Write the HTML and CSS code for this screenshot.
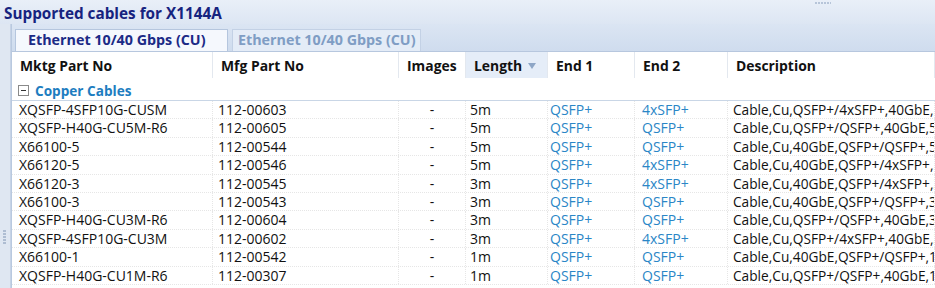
FILE: index.html
```html
<!DOCTYPE html>
<html lang="en">
<head>
    <meta charset="UTF-8">
    <title>Supported cables for X1144A</title>
    <link rel="stylesheet" href="styles.css">
</head>
<body>
    <div class="titlebar">
        <span class="title">Supported cables for X1144A</span>
        <span class="grip-h"></span>
    </div>
    <div class="main">
        <div class="side"><span class="grip-v"></span></div>
        <div class="panel">
            <div class="tabs">
                <div class="tab active">Ethernet 10/40 Gbps (CU)</div>
                <div class="tab">Ethernet 10/40 Gbps (CU)</div>
            </div>
            <div class="grid">
                <div class="row head">
                    <div class="cell">Mktg Part No</div>
                    <div class="cell">Mfg Part No</div>
                    <div class="cell">Images</div>
                    <div class="cell sorted">Length <span class="sort"></span></div>
                    <div class="cell">End 1</div>
                    <div class="cell">End 2</div>
                    <div class="cell">Description</div>
                </div>
                <div class="group"><span class="toggle"></span>Copper Cables</div>
                <div id="rows"></div>
            </div>
        </div>
    </div>

    <script>
        const cables = [
            ['XQSFP-4SFP10G-CUSM', '112-00603', '5m', 'QSFP+', '4xSFP+', 'Cable,Cu,QSFP+/4xSFP+,40GbE,5m'],
            ['XQSFP-H40G-CU5M-R6', '112-00605', '5m', 'QSFP+', 'QSFP+', 'Cable,Cu,QSFP+/QSFP+,40GbE,5m'],
            ['X66100-5', '112-00544', '5m', 'QSFP+', 'QSFP+', 'Cable,Cu,40GbE,QSFP+/QSFP+,5m'],
            ['X66120-5', '112-00546', '5m', 'QSFP+', '4xSFP+', 'Cable,Cu,40GbE,QSFP+/4xSFP+,5m'],
            ['X66120-3', '112-00545', '3m', 'QSFP+', '4xSFP+', 'Cable,Cu,40GbE,QSFP+/4xSFP+,3m'],
            ['X66100-3', '112-00543', '3m', 'QSFP+', 'QSFP+', 'Cable,Cu,40GbE,QSFP+/QSFP+,3m'],
            ['XQSFP-H40G-CU3M-R6', '112-00604', '3m', 'QSFP+', 'QSFP+', 'Cable,Cu,QSFP+/QSFP+,40GbE,3m'],
            ['XQSFP-4SFP10G-CU3M', '112-00602', '3m', 'QSFP+', '4xSFP+', 'Cable,Cu,QSFP+/4xSFP+,40GbE,3m'],
            ['X66100-1', '112-00542', '1m', 'QSFP+', 'QSFP+', 'Cable,Cu,40GbE,QSFP+/QSFP+,1m'],
            ['XQSFP-H40G-CU1M-R6', '112-00307', '1m', 'QSFP+', 'QSFP+', 'Cable,Cu,QSFP+/QSFP+,40GbE,1m']
        ];

        const rows = document.getElementById('rows');
        cables.forEach(c => {
            const row = document.createElement('div');
            row.className = 'row data';
            row.innerHTML =
                `<div class="cell">${c[0]}</div>` +
                `<div class="cell">${c[1]}</div>` +
                `<div class="cell center">-</div>` +
                `<div class="cell">${c[2]}</div>` +
                `<div class="cell link">${c[3]}</div>` +
                `<div class="cell link">${c[4]}</div>` +
                `<div class="cell desc">${c[5]}</div>`;
            rows.appendChild(row);
        });
    </script>
</body>
</html>
```

FILE: styles.css
```css
body {
    margin: 0;
    width: 935px;
    height: 288px;
    overflow: hidden;
    background: #dbe4f1;
    font-family: "Open Sans", "Noto Sans", sans-serif;
    font-size: 14px;
    color: #111;
}

.titlebar {
    height: 24px;
    display: flex;
    align-items: center;
    padding: 1px 0 0 4px;
    box-sizing: border-box;
    background: linear-gradient(#e9eff8, #dde6f3);
    position: relative;
}

.title {
    font-weight: bold;
    color: #16237f;
    font-size: 15.3px;
}

.grip-h {
    position: absolute;
    left: 815px;
    top: 2px;
    width: 16px;
    height: 2px;
    background: repeating-linear-gradient(90deg, #b7c5d9 0 2px, transparent 2px 3px);
}

.main {
    display: flex;
    height: 264px;
}

.side {
    width: 10px;
    background: #dfe7f2;
    border-right: 1px solid #c6d3e6;
    position: relative;
}

.grip-v {
    position: absolute;
    left: 3px;
    top: 206px;
    width: 3px;
    height: 14px;
    background: repeating-linear-gradient(#aebdd2 0 2px, transparent 2px 3px);
}

.panel {
    flex: 1;
    display: flex;
    flex-direction: column;
    background: #d2deef;
    border-left: 1px solid #b9c9df;
}

.tabs {
    display: flex;
    gap: 4px;
    padding: 5px 0 0 3px;
    height: 22px;
    background: linear-gradient(#dbe5f3, #cfdcee);
    border-bottom: 1px solid #b7c7de;
}

.tab {
    box-sizing: border-box;
    width: 189px;
    padding-left: 5px;
    line-height: 20px;
    font-size: 14.3px;
    font-weight: bold;
    color: #7f9dc4;
    background: #e4ecf7;
    border: 1px solid #c3d1e5;
    border-bottom: none;
    white-space: nowrap;
}

.tab.active {
    width: 213px;
    padding-left: 12px;
    color: #1b2a86;
    background: #f5f8fd;
    border-color: #b5c6de;
}

.grid {
    flex: 1;
    background: #fff;
}

.row {
    display: grid;
    grid-template-columns: 201px 186px 67px 82px 87px 93px 1fr;
    white-space: nowrap;
    overflow: hidden;
}

.cell {
    overflow: hidden;
}

.head {
    height: 26px;
    align-items: stretch;
    font-weight: bold;
    font-size: 13.9px;
}

.head .cell {
    display: flex;
    align-items: center;
    padding-left: 8px;
    border-right: 1px solid #e3e8ef;
}

.head .sorted {
    background: #e5edf8;
}

.sort {
    width: 0;
    height: 0;
    margin-left: 6px;
    margin-top: 2px;
    border-left: 4px solid transparent;
    border-right: 4px solid transparent;
    border-top: 6px solid #8ea6c6;
}

.group {
    height: 23px;
    display: flex;
    align-items: center;
    padding: 2px 0 0 6px;
    box-sizing: border-box;
    font-weight: bold;
    font-size: 13.6px;
    color: #1d7dc0;
    border-bottom: 1px solid #c9d6e6;
}

.toggle {
    width: 9px;
    height: 9px;
    border: 1px solid #8a8a8a;
    margin-right: 6px;
    position: relative;
    background: #fff;
}

.toggle::after {
    content: "";
    position: absolute;
    left: 2px;
    top: 4px;
    width: 5px;
    height: 1px;
    background: #333;
}

.data {
    height: 18.4px;
    line-height: 18px;
    border-bottom: 1px dotted #e6e6e6;
    box-sizing: border-box;
}

.data .cell {
    padding-left: 7px;
    border-right: 1px dotted #e6e6e6;
}

.data .cell:nth-child(2) { padding-left: 5px; }
.data .cell:nth-child(4) { padding-left: 4px; }
.data .cell:nth-child(5) { padding-left: 2px; }
.data .cell:nth-child(6) { padding-left: 7px; }
.data .cell:nth-child(7) { padding-left: 5px; }

.data .center {
    text-align: center;
    padding-left: 0;
}

.data .desc {
    font-size: 13.7px;
}

.link {
    color: #2a86c6;
}
```
